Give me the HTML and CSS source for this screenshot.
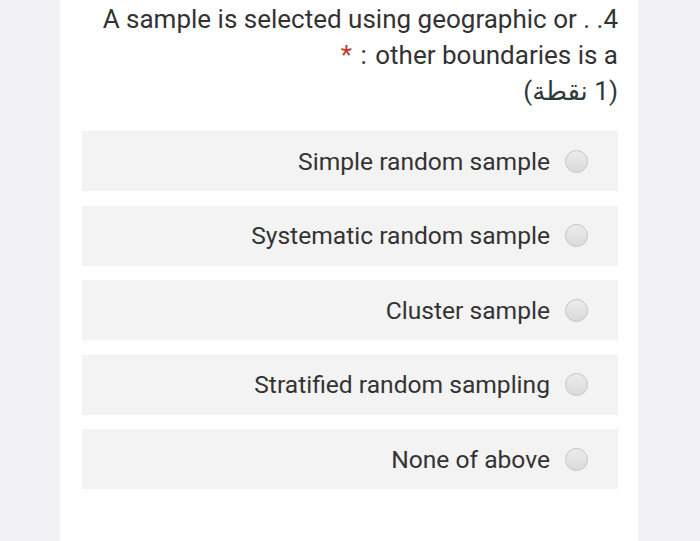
FILE: index.html
```html
<!DOCTYPE html>
<html>
<head>
<meta charset="utf-8">
<link rel="stylesheet" href="styles.css">
</head>
<body>
<div class="card">
  <div class="question">
    <div class="qline">A sample is selected using geographic or . .4</div>
    <div class="qline"><span class="req">*</span><span class="colon"> : </span>other boundaries is a</div>
    <div class="qline points" dir="rtl">(1 نقطة)</div>
  </div>
  <div class="options">
    <div class="option"><span class="label">Simple random sample</span><span class="radio"></span></div>
    <div class="option"><span class="label">Systematic random sample</span><span class="radio"></span></div>
    <div class="option"><span class="label">Cluster sample</span><span class="radio"></span></div>
    <div class="option"><span class="label">Stratified random sampling</span><span class="radio"></span></div>
    <div class="option"><span class="label">None of above</span><span class="radio"></span></div>
  </div>
</div>
</body>
</html>
```
FILE: styles.css
```css
html, body {
  margin: 0;
  padding: 0;
  height: 100%;
}
body {
  background: #f1f1f6;
  font-family: Roboto, "Noto Sans", sans-serif;
  color: #333333;
  display: flex;
  justify-content: flex-start;
}
.card {
  margin-left: 60px;
  width: 578px;
  min-height: 541px;
  background: #ffffff;
  box-sizing: border-box;
  padding: 0 20px 0 22px;
}
.question {
  text-align: right;
  font-size: 26px;
  line-height: 36px;
  padding-top: 1px;
}
.req {
  color: #c0392b;
}
.colon {
  word-spacing: 2px;
}
.points {
  text-align: right;
  font-family: Roboto, "Noto Sans", "DejaVu Sans", sans-serif;
  color: #2f3a3a;
}
.options {
  margin-top: 22px;
  display: flex;
  flex-direction: column;
  gap: 14.5px;
}
.option {
  height: 60px;
  flex: 0 0 60px;
  background: #f3f3f3;
  display: flex;
  align-items: center;
  justify-content: flex-end;
  padding-right: 30px;
  gap: 15px;
}
.label {
  font-size: 24.6px;
  color: #333333;
}
.radio {
  width: 23px;
  height: 23px;
  border-radius: 50%;
  border: 1px solid #c4c4c4;
  background: linear-gradient(#ececec, #dadada);
  box-sizing: border-box;
}
```
